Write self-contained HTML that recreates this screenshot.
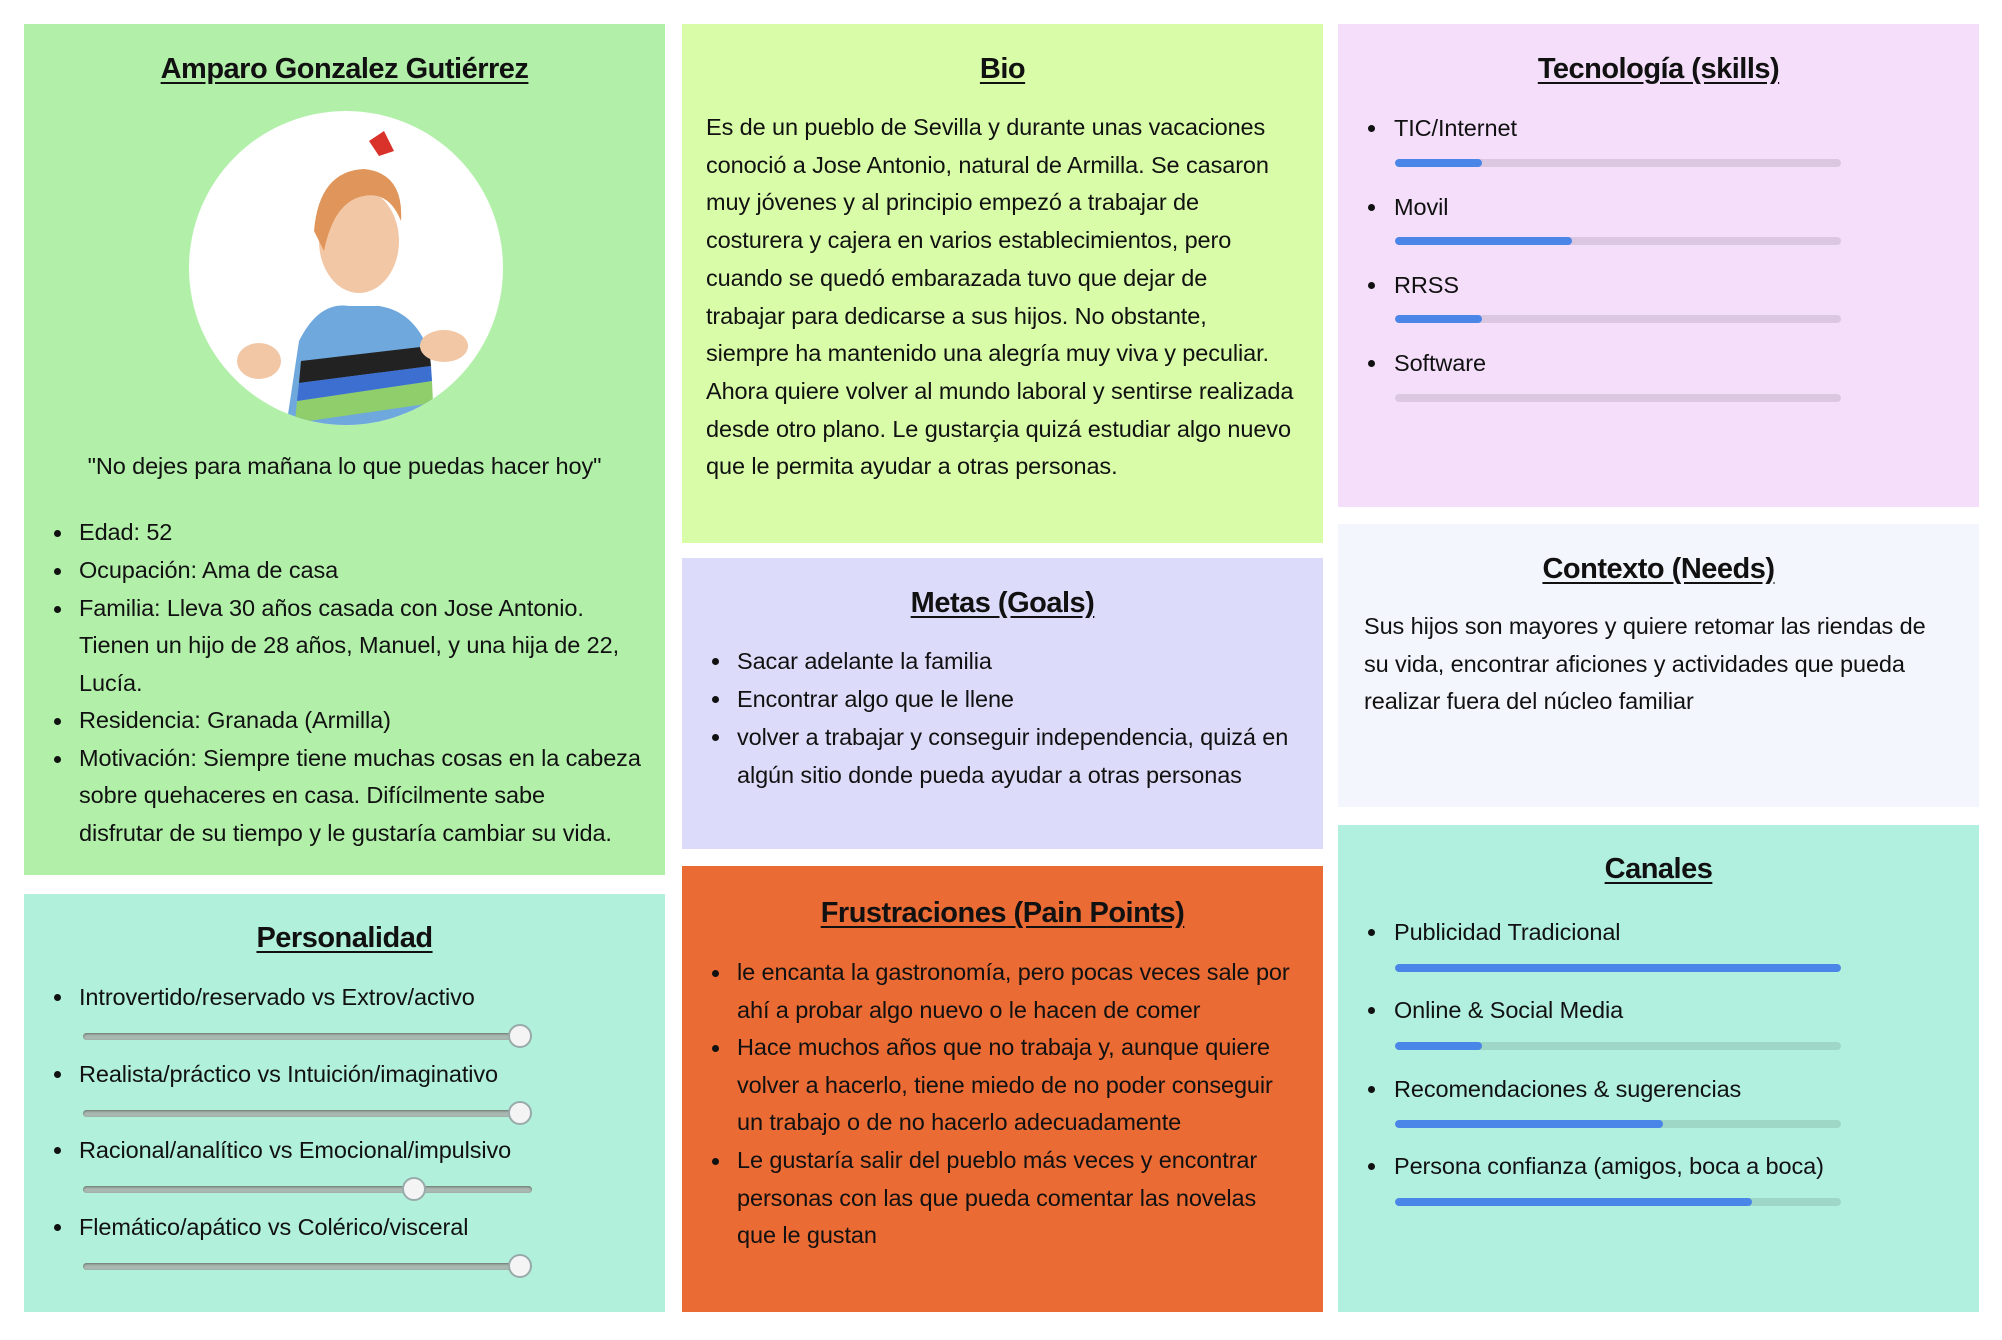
<!DOCTYPE html>
<html><head><meta charset="utf-8"><style>
*{margin:0;padding:0;box-sizing:border-box}
body{width:2002px;height:1340px;background:#fff;position:relative;overflow:hidden;font-family:"Liberation Sans",sans-serif;color:#111}
.c{position:absolute}
.h{position:absolute;left:0;right:0;text-align:center;font-weight:bold;font-size:29px;text-decoration:underline;text-underline-offset:4px;letter-spacing:-0.5px;color:#111}
.l{position:absolute;font-size:23.5px;line-height:38px;white-space:nowrap;letter-spacing:-0.1px}
.b{position:absolute;width:7px;height:7px;border-radius:50%;background:#111}
.tr{position:absolute;height:8px;border-radius:4px;background:rgba(0,0,0,0.1);overflow:hidden}
.tr i{position:absolute;left:0;top:0;bottom:0;background:#4a86e8;border-radius:4px}
.sl{position:absolute;left:83px;width:449px;height:7px;border-radius:4px;background:#a9b8b0;box-shadow:inset 0 1px 2px rgba(0,0,0,.4)}
.th{position:absolute;width:24px;height:24px;border-radius:50%;background:#f4f4f4;border:2px solid #9aa;top:-9px}
</style></head><body>

<!-- Card 1 -->
<div class="c" style="left:24px;top:24px;width:641px;height:851px;background:#b2f0aa">
 <div class="h" style="top:29px">Amparo Gonzalez Gutiérrez</div>
 <svg class="c" style="left:165px;top:87px" width="314" height="314" viewBox="0 0 314 314">
  <defs><clipPath id="cp"><circle cx="157" cy="157" r="157"/></clipPath></defs>
  <circle cx="157" cy="157" r="157" fill="#fff"/>
  <g clip-path="url(#cp)">
   <path d="M95 330 L110 230 Q130 190 160 195 L190 195 Q225 200 240 240 L245 330 Z" fill="#6fa8dc"/>
   <path d="M112 250 L240 235 L242 255 L110 272 Z" fill="#222"/>
   <path d="M108 290 L243 270 L244 292 L106 312 Z" fill="#8fce6a"/>
   <path d="M110 272 L242 255 L243 270 L108 290 Z" fill="#3d6fd1"/>
   <ellipse cx="170" cy="130" rx="40" ry="52" fill="#f2c7a6"/>
   <path d="M125 120 Q130 60 175 58 Q215 62 212 110 Q200 80 175 85 Q145 90 135 140 Z" fill="#e0955a"/>
   <path d="M180 30 L195 20 L205 40 L190 45 Z" fill="#d9322a"/>
   <ellipse cx="70" cy="250" rx="22" ry="18" fill="#f2c7a6"/>
   <ellipse cx="255" cy="235" rx="24" ry="16" fill="#f2c7a6"/>
  </g>
 </svg>
 <div class="l" style="left:0;right:0;text-align:center;top:423px">"No dejes para mañana lo que puedas hacer hoy"</div>
 <div class="b" style="left:30px;top:506px"></div><div class="l" style="left:55px;top:489px">Edad: 52</div>
 <div class="b" style="left:30px;top:544px"></div><div class="l" style="left:55px;top:527px">Ocupación: Ama de casa</div>
 <div class="b" style="left:30px;top:582px"></div><div class="l" style="left:55px;top:565px">Familia: Lleva 30 años casada con Jose Antonio.</div>
 <div class="l" style="left:55px;top:602px">Tienen un hijo de 28 años, Manuel, y una hija de 22,</div>
 <div class="l" style="left:55px;top:640px">Lucía.</div>
 <div class="b" style="left:30px;top:694px"></div><div class="l" style="left:55px;top:677px">Residencia: Granada (Armilla)</div>
 <div class="b" style="left:30px;top:732px"></div><div class="l" style="left:55px;top:715px">Motivación: Siempre tiene muchas cosas en la cabeza</div>
 <div class="l" style="left:55px;top:752px">sobre quehaceres en casa. Difícilmente sabe</div>
 <div class="l" style="left:55px;top:790px">disfrutar de su tiempo y le gustaría cambiar su vida.</div>
</div>

<!-- Personalidad -->
<div class="c" style="left:24px;top:894px;width:641px;height:418px;background:#b1f0da"></div>
<div class="h" style="left:24px;right:auto;width:641px;top:922px">Personalidad</div>
<div class="b" style="left:54px;top:994px"></div><div class="l" style="left:79px;top:978px">Introvertido/reservado vs Extrov/activo</div>
<div class="sl" style="top:1033px"><div class="th" style="left:425px"></div></div>
<div class="b" style="left:54px;top:1071px"></div><div class="l" style="left:79px;top:1055px">Realista/práctico vs Intuición/imaginativo</div>
<div class="sl" style="top:1110px"><div class="th" style="left:425px"></div></div>
<div class="b" style="left:54px;top:1147px"></div><div class="l" style="left:79px;top:1131px">Racional/analítico vs Emocional/impulsivo</div>
<div class="sl" style="top:1186px"><div class="th" style="left:319px"></div></div>
<div class="b" style="left:54px;top:1224px"></div><div class="l" style="left:79px;top:1208px">Flemático/apático vs Colérico/visceral</div>
<div class="sl" style="top:1263px"><div class="th" style="left:425px"></div></div>

<!-- Bio -->
<div class="c" style="left:682px;top:24px;width:641px;height:519px;background:#d8fca7">
 <div class="h" style="top:29px">Bio</div>
 <div class="l" style="left:24px;top:85px;line-height:37.7px">Es de un pueblo de Sevilla y durante unas vacaciones<br>conoció a Jose Antonio, natural de Armilla. Se casaron<br>muy jóvenes y al principio empezó a trabajar de<br>costurera y cajera en varios establecimientos, pero<br>cuando se quedó embarazada tuvo que dejar de<br>trabajar para dedicarse a sus hijos. No obstante,<br>siempre ha mantenido una alegría muy viva y peculiar.<br>Ahora quiere volver al mundo laboral y sentirse realizada<br>desde otro plano. Le gustarçia quizá estudiar algo nuevo<br>que le permita ayudar a otras personas.</div>
</div>

<!-- Metas -->
<div class="c" style="left:682px;top:558px;width:641px;height:291px;background:#dcdcfa">
 <div class="h" style="top:29px">Metas (Goals)</div>
 <div class="b" style="left:30px;top:100px"></div><div class="l" style="left:55px;top:84px">Sacar adelante la familia</div>
 <div class="b" style="left:30px;top:138px"></div><div class="l" style="left:55px;top:122px">Encontrar algo que le llene</div>
 <div class="b" style="left:30px;top:176px"></div><div class="l" style="left:55px;top:160px">volver a trabajar y conseguir independencia, quizá en</div>
 <div class="l" style="left:55px;top:198px">algún sitio donde pueda ayudar a otras personas</div>
</div>

<!-- Frustraciones -->
<div class="c" style="left:682px;top:866px;width:641px;height:446px;background:#eb6b34">
 <div class="h" style="top:31px">Frustraciones (Pain Points)</div>
 <div class="b" style="left:30px;top:104px"></div><div class="l" style="left:55px;top:88px;line-height:37.7px">le encanta la gastronomía, pero pocas veces sale por<br>ahí a probar algo nuevo o le hacen de comer</div>
 <div class="b" style="left:30px;top:179px"></div><div class="l" style="left:55px;top:163px;line-height:37.7px">Hace muchos años que no trabaja y, aunque quiere<br>volver a hacerlo, tiene miedo de no poder conseguir<br>un trabajo o de no hacerlo adecuadamente</div>
 <div class="b" style="left:30px;top:292px"></div><div class="l" style="left:55px;top:276px;line-height:37.7px">Le gustaría salir del pueblo más veces y encontrar<br>personas con las que pueda comentar las novelas<br>que le gustan</div>
</div>

<!-- Tecnologia -->
<div class="c" style="left:1338px;top:24px;width:641px;height:483px;background:#f4defa">
 <div class="h" style="top:29px">Tecnología (skills)</div>
 <div class="b" style="left:30px;top:101px"></div><div class="l" style="left:56px;top:85px">TIC/Internet</div>
 <div class="tr" style="left:57px;top:135px;width:446px"><i style="width:87px"></i></div>
 <div class="b" style="left:30px;top:180px"></div><div class="l" style="left:56px;top:164px">Movil</div>
 <div class="tr" style="left:57px;top:213px;width:446px"><i style="width:177px"></i></div>
 <div class="b" style="left:30px;top:258px"></div><div class="l" style="left:56px;top:242px">RRSS</div>
 <div class="tr" style="left:57px;top:291px;width:446px"><i style="width:87px"></i></div>
 <div class="b" style="left:30px;top:336px"></div><div class="l" style="left:56px;top:320px">Software</div>
 <div class="tr" style="left:57px;top:370px;width:446px"></div>
</div>

<!-- Contexto -->
<div class="c" style="left:1338px;top:524px;width:641px;height:283px;background:#f3f6fd">
 <div class="h" style="top:29px">Contexto (Needs)</div>
 <div class="l" style="left:26px;top:84px;line-height:37.7px">Sus hijos son mayores y quiere retomar las riendas de<br>su vida, encontrar aficiones y actividades que pueda<br>realizar fuera del núcleo familiar</div>
</div>

<!-- Canales -->
<div class="c" style="left:1338px;top:825px;width:641px;height:487px;background:#b1f0de">
 <div class="h" style="top:28px">Canales</div>
 <div class="b" style="left:30px;top:104px"></div><div class="l" style="left:56px;top:88px">Publicidad Tradicional</div>
 <div class="tr" style="left:57px;top:139px;width:446px"><i style="width:446px"></i></div>
 <div class="b" style="left:30px;top:182px"></div><div class="l" style="left:56px;top:166px">Online &amp; Social Media</div>
 <div class="tr" style="left:57px;top:217px;width:446px"><i style="width:87px"></i></div>
 <div class="b" style="left:30px;top:261px"></div><div class="l" style="left:56px;top:245px">Recomendaciones &amp; sugerencias</div>
 <div class="tr" style="left:57px;top:295px;width:446px"><i style="width:268px"></i></div>
 <div class="b" style="left:30px;top:338px"></div><div class="l" style="left:56px;top:322px">Persona confianza (amigos, boca a boca)</div>
 <div class="tr" style="left:57px;top:373px;width:446px"><i style="width:357px"></i></div>
</div>
</body></html>
